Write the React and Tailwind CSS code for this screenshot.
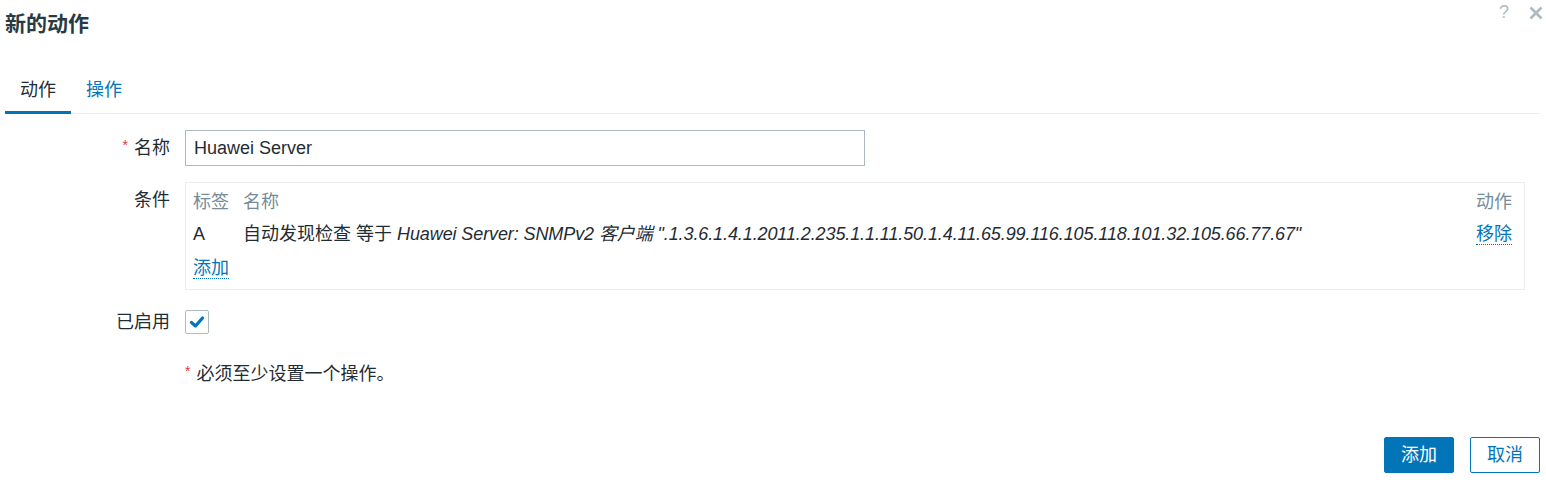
import React from "react";

const font = { fontFamily: '"Liberation Sans", Arial, "Noto Sans CJK SC", sans-serif' };

export default function App() {
  return (
    <div className="relative w-[1546px] h-[486px] bg-white text-[18px] text-[#1f2c33]" style={font}>
      <div className="absolute right-[3px] top-[1px] flex items-center gap-[20px] text-[#acbbc2]">
        <span className="text-[18px] leading-[22px]">?</span>
        <svg width="14" height="14" viewBox="0 0 14 14" className="mt-[1px]">
          <path d="M1.5 1.5 L12.5 12.5 M12.5 1.5 L1.5 12.5" stroke="#acbbc2" strokeWidth="2.6" />
        </svg>
      </div>

      <div className="h-[48px] pl-[5px] pt-[10px]">
        <h4 className="text-[21px] leading-[28px] font-bold text-[#2a3a42]">新的动作</h4>
      </div>

      <div className="mt-[18px] ml-[5px] mr-[6px] flex border-b border-[#ebeef0]">
        <div className="px-[15px] pt-[12px] pb-[9px] leading-[24px] border-b-[3px] border-[#0275b8] -mb-px text-[#1f2c33]">动作</div>
        <div className="px-[15px] pt-[12px] pb-[9px] leading-[24px] text-[#0275b8]">操作</div>
      </div>

      <div className="mt-[16px] grid grid-cols-[170px_1fr] gap-x-[15px] gap-y-[16px] pr-[21px]">
        <div className="flex items-center justify-end leading-[24px]">
          <span className="text-[14px] text-[#e33734] mr-[6px] relative -top-[3px]">*</span>名称
        </div>
        <div>
          <div className="w-[680px] h-[36px] border border-[#acbbc2] flex items-center px-[8px] leading-[24px]">Huawei Server</div>
        </div>

        <div className="text-right pt-[6px] leading-[24px]">条件</div>
        <div className="border border-[#ebeef0] pl-[7px] pr-[12px] pt-[7px] pb-[9px]">
          <table className="w-full border-collapse leading-[24px]">
            <tbody>
              <tr className="text-[#768d99]">
                <td className="w-[50px] p-0 align-middle">标签</td>
                <td className="p-0">名称</td>
                <td className="p-0 text-right">动作</td>
              </tr>
              <tr>
                <td className="p-0 pt-[8px]">A</td>
                <td className="p-0 pt-[8px] whitespace-nowrap">
                  自动发现检查 等于 <i className="tracking-[-0.1px]">Huawei Server: SNMPv2 客户端 ".1.3.6.1.4.1.2011.2.235.1.1.11.50.1.4.11.65.99.116.105.118.101.32.105.66.77.67"</i>
                </td>
                <td className="p-0 pt-[8px] text-right">
                  <span className="text-[#0275b8] border-b border-dotted border-[#0275b8]">移除</span>
                </td>
              </tr>
              <tr>
                <td className="p-0 pt-[10px]" colSpan={3}>
                  <span className="text-[#0275b8] border-b border-dotted border-[#0275b8]">添加</span>
                </td>
              </tr>
            </tbody>
          </table>
        </div>

        <div className="flex items-center justify-end h-[32px] leading-[24px]">已启用</div>
        <div className="flex items-center h-[32px]">
          <div className="w-[24px] h-[24px] border border-[#acbbc2] rounded-[2px] flex items-center justify-center">
            <svg width="16" height="14" viewBox="0 0 16 14">
              <path d="M2.5 7.5 L6.5 11 L13.5 3" fill="none" stroke="#0275b8" strokeWidth="3.2" strokeLinecap="round" strokeLinejoin="round" />
            </svg>
          </div>
        </div>

        <div></div>
        <div className="pt-[8px] leading-[24px] flex items-center">
          <span className="text-[14px] text-[#e33734] mr-[6px] relative -top-[3px]">*</span>必须至少设置一个操作。
        </div>
      </div>

      <div className="mt-[51px] pr-[6px] flex justify-end gap-[16px]">
        <button className="w-[70px] h-[36px] rounded-[2px] bg-[#0275b8] text-white text-[18px] border border-[#0275b8]">添加</button>
        <button className="w-[70px] h-[36px] rounded-[2px] bg-white text-[#0275b8] text-[18px] border border-[#0275b8]">取消</button>
      </div>
    </div>
  );
}
